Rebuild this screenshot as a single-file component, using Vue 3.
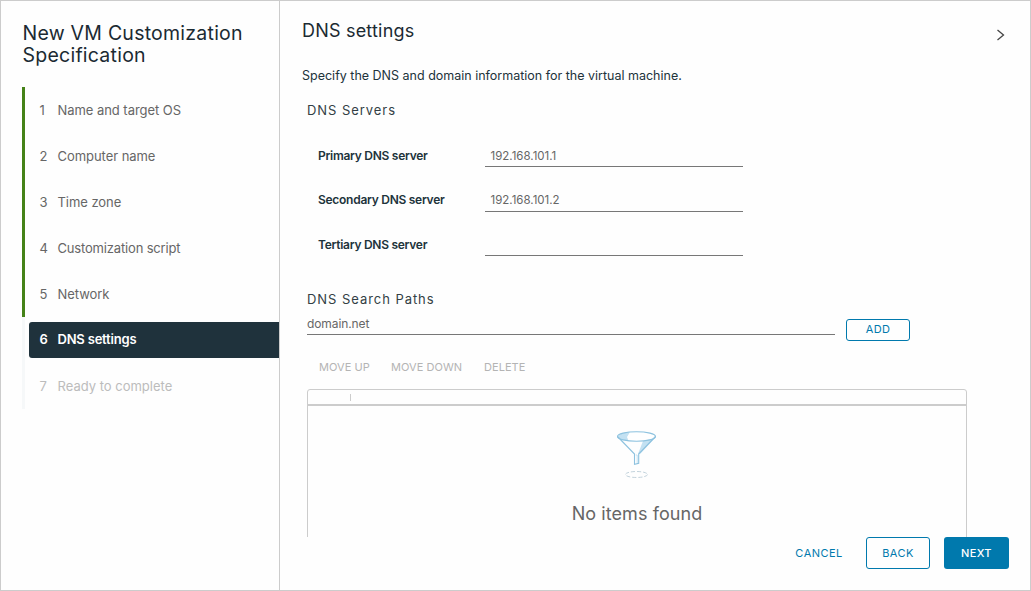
<script setup>
const steps = [
  { n: 1, label: 'Name and target OS', state: 'done' },
  { n: 2, label: 'Computer name', state: 'done' },
  { n: 3, label: 'Time zone', state: 'done' },
  { n: 4, label: 'Customization script', state: 'done' },
  { n: 5, label: 'Network', state: 'done' },
  { n: 6, label: 'DNS settings', state: 'active' },
  { n: 7, label: 'Ready to complete', state: 'todo' },
]
const servers = [
  { label: 'Primary DNS server', value: '192.168.101.1' },
  { label: 'Secondary DNS server', value: '192.168.101.2' },
  { label: 'Tertiary DNS server', value: '' },
]
</script>

<template>
  <div class="wizard">
    <aside class="sidebar">
      <h1>New VM Customization Specification</h1>
      <ol class="steps">
        <li v-for="s in steps" :key="s.n" :class="['step', s.state]">
          <div class="pill"><span class="num">{{ s.n }}</span><span class="name">{{ s.label }}</span></div>
        </li>
      </ol>
    </aside>
    <main class="main">
      <header class="head">
        <h2>DNS settings</h2>
        <svg class="chevron" width="10" height="12" viewBox="0 0 10 12">
          <path d="M1.5 1 L7.5 6 L1.5 11" fill="none" stroke="#454545" stroke-width="1.3" />
        </svg>
      </header>
      <div class="content">
        <p class="intro">Specify the DNS and domain information for the virtual machine.</p>
        <h3>DNS Servers</h3>
        <div class="servers">
          <div v-for="s in servers" :key="s.label" class="row">
            <label>{{ s.label }}</label>
            <div class="field">{{ s.value }}</div>
          </div>
        </div>
        <h3 class="paths">DNS Search Paths</h3>
        <div class="search">
          <div class="domain">domain.net</div>
          <button class="add">ADD</button>
        </div>
        <div class="actions">
          <span class="up">MOVE UP</span><span class="down">MOVE DOWN</span><span>DELETE</span>
        </div>
        <div class="grid">
          <div class="grid-head"><i></i></div>
          <div class="empty">
            <svg width="42" height="50" viewBox="0 0 42 50">
              <ellipse cx="20.5" cy="6.5" rx="19" ry="4.8" fill="#fff" />
              <path d="M2 7 Q3 2.8 14 2 L11 7 L12.5 10.7 Q3 9.7 2 7Z" fill="#c3e1f2" />
              <path d="M27 11 L39 8 L24.5 23.5 L22 24Z" fill="#c3e1f2" />
              <path d="M1.5 6.5 L18.5 24 V34.3 L22.7 33.3 V24 L39.5 6.5" fill="none" stroke="#8dc2df" stroke-width="1.1" />
              <ellipse cx="20.5" cy="6.5" rx="19" ry="4.8" fill="none" stroke="#8dc2df" stroke-width="1.1" />
              <path d="M19.7 25 H21.2 V33" fill="none" stroke="#c3e1f2" />
              <ellipse cx="20.5" cy="44.5" rx="11" ry="3" fill="none" stroke="#c3d3dc" stroke-width="1" stroke-dasharray="4 2" />
            </svg>
            <div class="none">No items found</div>
          </div>
        </div>
      </div>
      <footer class="foot">
        <button class="btn cancel">CANCEL</button>
        <button class="btn back">BACK</button>
        <button class="btn next">NEXT</button>
      </footer>
    </main>
  </div>
</template>

<style>
body { background: #fefefe; }
</style>

<style scoped>
* { box-sizing: border-box; margin: 0; padding: 0; }
.wizard {
  width: 1031px; height: 591px; display: flex; overflow: hidden;
  border: 1px solid #ccc; background: #fefefe; color: #21333b;
  font-family: Inter, "Liberation Sans", sans-serif; white-space: nowrap;
}
.sidebar { width: 279px; border-right: 1px solid #ccc; padding: 21px 0 0 21px; }
h1 { white-space: normal; width: 245px; font-size: 19.5px; line-height: 22px; font-weight: 400; letter-spacing: .24px; padding-left: .5px; height: 65px; color: #1b2a32; }
.steps { list-style: none; }
.step { height: 46px; border-left: 3px solid #458218; padding: 5px 0 5px 4px; }
.step.active, .step.todo { border-color: #f6f8f9; }
.pill { height: 36px; display: flex; align-items: center; padding: 0 0 0 10.5px; font-size: 13px; letter-spacing: -.05px; color: #666; border-radius: 3px 0 0 3px; }
.step:nth-child(4) .pill { letter-spacing: -.17px; }
.active .pill { background: #1f323c; color: #fff; font-weight: 600; letter-spacing: -.2px; padding-bottom: 2px; }
.todo .pill { color: #bcbcbc; letter-spacing: 0; }
.num { width: 18px; }
.main { flex: 1; display: flex; flex-direction: column; }
.head { height: 64px; padding: 16px 24px 0 22px; display: flex; justify-content: space-between; }
h2 { font-size: 18px; line-height: 28px; font-weight: 400; letter-spacing: .2px; color: #1b2a32; }
.chevron { margin-top: 12px; }
.content { height: 472px; overflow: hidden; padding-left: 22px; }
.intro { font-size: 12.5px; line-height: 20px; padding-top: 1px; }
h3 { font-size: 13px; line-height: 20px; font-weight: 400; letter-spacing: .95px; margin: 14px 0 0 5px; color: #333f45; }
.servers { margin: 25px 0 0 16px; display: flex; flex-direction: column; gap: 22.5px; }
.row { display: flex; height: 22px; }
label { width: 167px; font-size: 12px; line-height: 21px; font-weight: 600; letter-spacing: -.27px; }
.field { width: 258px; border-bottom: 1px solid #777; padding-left: 5.5px; font-size: 11.5px; line-height: 22px; color: #666; }
.row:nth-child(2) label { line-height: 20.6px; }
.row:nth-child(2) .field { line-height: 21.4px; }
.paths { margin-top: 33px; }
.search { display: flex; margin: 5px 0 0 5px; gap: 11px; }
.domain { width: 528px; height: 21px; border-bottom: 1px solid #777; font-size: 12px; line-height: 20px; color: #666; letter-spacing: -.1px; }
.add { width: 64px; height: 22px; margin-top: 5px; padding-bottom: 2px; border: 1px solid #0079ad; border-radius: 3px; background: none; color: #0079ad; font: 400 11px Inter, sans-serif; letter-spacing: .3px; }
.actions { display: flex; margin: 16px 0 0 17px; font-size: 11px; line-height: 20px; color: #b4b4b4; letter-spacing: .05px; }
.up { width: 72px; }
.down { width: 93px; }
.grid { width: 660px; height: 200px; margin: 12px 0 0 5px; border: 1px solid #ccc; border-radius: 3px 3px 0 0; }
.grid-head { height: 16px; border-bottom: 2px solid #ccc; padding: 4px 0 0 42px; }
.grid-head i { display: block; width: 1px; height: 7px; background: #ccc; }
.empty { display: flex; flex-direction: column; align-items: center; padding-top: 24px; }
.none { font-size: 18px; line-height: 24px; margin-top: 22px; letter-spacing: .08px; color: #666; }
.foot { display: flex; justify-content: flex-end; padding-right: 21px; }
.btn { height: 32px; border: 1px solid transparent; border-radius: 3px; background: none; color: #0079ad; font: 400 11px Inter, sans-serif; letter-spacing: .45px; }
.cancel { width: 70px; margin-right: 12px; }
.back { width: 64px; border-color: #0079ad; margin-right: 14px; }
.next { width: 65px; background: #0079ad; color: #fff; font-weight: 500; letter-spacing: .35px; }
</style>
